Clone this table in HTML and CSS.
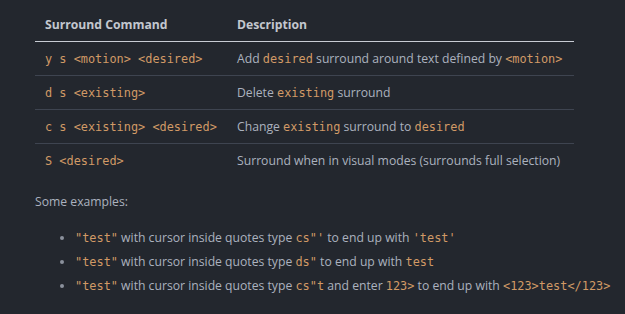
FILE: index.html
```html
<!DOCTYPE html>
<html>
<head>
<meta charset="utf-8">
<link rel="stylesheet" href="styles.css">
</head>
<body>
<div class="doc">
  <table class="cmds">
    <thead>
      <tr><th class="c1">Surround Command</th><th>Description</th></tr>
    </thead>
    <tbody>
      <tr><td><code>y s &lt;motion&gt; &lt;desired&gt;</code></td><td>Add <code>desired</code> surround around text defined by <code>&lt;motion&gt;</code></td></tr>
      <tr><td><code>d s &lt;existing&gt;</code></td><td>Delete <code>existing</code> surround</td></tr>
      <tr><td><code>c s &lt;existing&gt; &lt;desired&gt;</code></td><td>Change <code>existing</code> surround to <code>desired</code></td></tr>
      <tr><td><code>S &lt;desired&gt;</code></td><td>Surround when in visual modes (surrounds full selection)</td></tr>
    </tbody>
  </table>
  <p class="intro">Some examples:</p>
  <ul class="examples">
    <li><code>"test"</code> with cursor inside quotes type <code>cs"'</code> to end up with <code>'test'</code></li>
    <li><code>"test"</code> with cursor inside quotes type <code>ds"</code> to end up with <code>test</code></li>
    <li><code>"test"</code> with cursor inside quotes type <code>cs"t</code> and enter <code>123&gt;</code> to end up with <code>&lt;123&gt;test&lt;/123&gt;</code></li>
  </ul>
</div>
</body>
</html>
```

FILE: styles.css
```css
html, body {
  margin: 0;
  padding: 0;
  background: #23272e;
}
.doc {
  padding: 8px 35px 0 35px;
  color: #abb2bf;
  font-family: "Open Sans", "Noto Sans", sans-serif;
  font-size: 12.2px;
}
code {
  font-family: "DejaVu Sans Mono", monospace;
  font-size: 11.9px;
  color: #d19a66;
}
.cmds {
  width: 539px;
  border-collapse: collapse;
  table-layout: fixed;
}
.cmds th {
  text-align: left;
  font-weight: 700;
  color: #c3c7cf;
  height: 33px;
  padding: 0 10px;
  border-bottom: 1px solid #c8ccd4;
}
.cmds th.c1 {
  width: 172px;
}
.cmds td {
  height: 33px;
  padding: 0 10px;
  border-bottom: 1px solid #3e4450;
  white-space: nowrap;
}
.cmds tbody tr:last-child td {
  border-bottom: none;
}
.intro {
  margin: 16px 0 0 0;
}
.examples {
  margin: 16px 0 0 0;
  padding-left: 40px;
}
.examples li {
  line-height: 23px;
  white-space: nowrap;
}
.examples li::marker {
  color: #8b919c;
}
```
